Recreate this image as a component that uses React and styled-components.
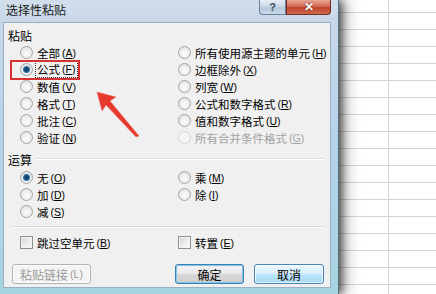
import React from "react";
import styled, { createGlobalStyle } from "styled-components";

const GlobalStyle = createGlobalStyle`
  html, body {
    margin: 0;
    padding: 0;
  }
  body {
    font-family: "Noto Sans CJK SC", "Liberation Sans", sans-serif;
    color: #000;
  }
`;

const Screen = styled.div`
  width: 436px;
  height: 294px;
  overflow: hidden;
  position: relative;
  display: flex;
  background-color: #fff;
  background-image: linear-gradient(
      90deg,
      transparent 388px,
      #d4d4d4 388px,
      #d4d4d4 389px,
      transparent 389px
    ),
    linear-gradient(#d4d4d4 1px, transparent 1px);
  background-size: 100% 100%, 100% 17px;
  background-position: 0 0, 0 12px;
`;

const Dialog = styled.div`
  width: 339px;
  height: 294px;
  box-sizing: border-box;
  padding: 0 7px 6px 3px;
  display: flex;
  flex-direction: column;
  background: linear-gradient(
    180deg,
    #d2deeb 0,
    #c8d8e9 22px,
    #b6d2ea 140px,
    #a6d4e0 100%
  );
  border-right: 1px solid #52707f;
  box-shadow: 3px 0 8px rgba(0, 0, 0, 0.6), 8px 0 14px rgba(0, 0, 0, 0.25);
  flex-shrink: 0;
`;

const TitleBar = styled.div`
  height: 22px;
  display: flex;
  align-items: flex-start;
`;

const Title = styled.div`
  font-size: 12px;
  line-height: 20px;
  padding-left: 3px;
  color: #1a1a1a;
`;

const CaptionButtons = styled.div`
  margin-left: auto;
  display: flex;
`;

const CapButton = styled.div`
  width: ${(p) => (p.$close ? 45 : 27)}px;
  height: 15px;
  box-sizing: border-box;
  display: flex;
  align-items: center;
  justify-content: center;
  font-family: "Liberation Sans", sans-serif;
  font-weight: bold;
  font-size: ${(p) => (p.$close ? 12 : 11)}px;
  color: ${(p) => (p.$close ? "#fff" : "#3c4e62")};
  border: 1px solid ${(p) => (p.$close ? "#6e2e24" : "#6d8299")};
  border-top: none;
  border-radius: ${(p) => (p.$close ? "0 0 4px 0" : "0 0 0 4px")};
  background: ${(p) =>
    p.$close
      ? "linear-gradient(180deg, #e9a797 0, #d06a55 45%, #c0432c 55%, #cf6a4e 100%)"
      : "linear-gradient(180deg, #e6eef6 0, #cbd8e6 45%, #b5c7da 55%, #c9dbea 100%)"};
  text-shadow: ${(p) => (p.$close ? "0 0 2px #5a1a10" : "none")};
`;

const Body = styled.div`
  flex: 1;
  position: relative;
  background: #f0f0f0;
  border: 1px solid #9aaec4;
  padding: 6px 0 0 4px;
  display: flex;
  flex-direction: column;
`;

const GroupLabel = styled.div`
  font-size: 12px;
  line-height: 14px;
  height: 15px;
`;

const GroupHeader = styled.div`
  height: 23px;
  box-sizing: border-box;
  padding-top: 7px;
  display: flex;
  padding-right: 6px;
  align-items: flex-start;
`;

const HeaderText = styled.span`
  font-size: 12px;
  line-height: 14px;
`;

const HeaderLine = styled.span`
  flex: 1;
  margin: 5px 0 0 4px;
  height: 1px;
  background: #dcdfe3;
  border-bottom: 1px solid #fff;
`;

const OptionGrid = styled.div`
  display: grid;
  grid-template-columns: 158px 1fr;
  grid-auto-rows: 17px;
  padding-left: 12px;
`;

const Option = styled.div`
  display: flex;
  align-items: center;
  font-size: 11.5px;
  color: ${(p) => (p.$disabled ? "#a2a2a2" : "#000")};
  white-space: nowrap;
`;

const Radio = styled.span`
  width: 13px;
  height: 13px;
  box-sizing: border-box;
  border-radius: 50%;
  border: 1px solid ${(p) => (p.$disabled ? "#d2d2d2" : "#a4a4a4")};
  background: ${(p) =>
    p.$disabled
      ? "#f4f4f4"
      : "radial-gradient(circle at 50% 60%, #fdfdfd 0, #ececec 55%, #d6d6d6 100%)"};
  display: flex;
  align-items: center;
  justify-content: center;
  margin-right: 4px;
  flex-shrink: 0;

  &::after {
    content: "";
    display: ${(p) => (p.$checked ? "block" : "none")};
    width: 7px;
    height: 7px;
    border-radius: 50%;
    background: radial-gradient(
      circle at 50% 50%,
      #0d2a4a 0,
      #1d5a8c 45%,
      #6aa6d4 100%
    );
  }
`;

const Check = styled.span`
  width: 13px;
  height: 13px;
  box-sizing: border-box;
  border: 1px solid #8e8f8f;
  background: linear-gradient(135deg, #d2d2d2 0, #efefef 60%, #fbfbfb 100%);
  box-shadow: inset 0 0 0 1px #f4f4f4;
  margin-right: 4px;
  flex-shrink: 0;
`;

const Key = styled.span`
  font-family: "Liberation Sans", sans-serif;
  font-size: 10.5px;
  margin-left: 2px;

  u {
    text-underline-offset: 1px;
  }
`;

const Focus = styled.span`
  display: inline-flex;
  align-items: center;
  outline: 1px dotted #333;
  outline-offset: 0;
  padding: 0 2px 0 1px;
  margin-left: -1px;
  line-height: 15px;
`;

const Separator = styled.div`
  margin: 6px 6px 0 4px;
  height: 1px;
  background: #d5dadf;
  border-bottom: 1px solid #fff;
`;

const CheckGrid = styled(OptionGrid)`
  margin-top: 6px;
`;

const ButtonRow = styled.div`
  display: flex;
  margin-top: 13px;
  padding: 0 6px 0 4px;
  gap: 10px;
`;

const Button = styled.div`
  width: ${(p) => p.$w}px;
  height: 20px;
  box-sizing: border-box;
  border-radius: 3px;
  display: flex;
  align-items: center;
  justify-content: center;
  font-size: 12px;
  border: 1px solid
    ${(p) => (p.$disabled ? "#b0b4b7" : p.$default ? "#3c7fb1" : "#4a86b4")};
  color: ${(p) => (p.$disabled ? "#9a9a9a" : "#000")};
  background: ${(p) =>
    p.$disabled
      ? "#f4f4f4"
      : p.$default
      ? "linear-gradient(180deg, #f4f4f4 0, #e8e8e8 48%, #d8d8d8 52%, #cdcdcd 100%)"
      : "linear-gradient(180deg, #eaf6fd 0, #d9f0fc 48%, #bee6fd 52%, #a7d9f5 100%)"};
  box-shadow: ${(p) =>
    p.$default ? "inset 0 0 0 1px #7fc4ea" : "inset 0 0 0 1px rgba(255,255,255,0.7)"};
  margin-right: ${(p) => (p.$push ? "auto" : "0")};
`;

const RedBox = styled.div`
  position: absolute;
  left: 6px;
  top: 37px;
  width: 70px;
  height: 20px;
  box-sizing: border-box;
  border: 2px solid #d63232;
  pointer-events: none;
`;

const ArrowLayer = styled.svg`
  position: absolute;
  left: 0;
  top: 0;
  pointer-events: none;
`;

const pasteOptions = [
  ["全部", "A"],
  ["所有使用源主题的单元", "H"],
  ["公式", "F", true],
  ["边框除外", "X"],
  ["数值", "V"],
  ["列宽", "W"],
  ["格式", "T"],
  ["公式和数字格式", "R"],
  ["批注", "C"],
  ["值和数字格式", "U"],
  ["验证", "N"],
  ["所有合并条件格式", "G", false, true],
];

const opOptions = [
  ["无", "O", true],
  ["乘", "M"],
  ["加", "D"],
  ["除", "I"],
  ["减", "S"],
];

function Label({ text, k }) {
  return (
    <>
      {text}
      <Key>
        (<u>{k}</u>)
      </Key>
    </>
  );
}

function RadioOption({ text, k, checked, disabled, focused }) {
  return (
    <Option $disabled={disabled}>
      <Radio $checked={checked} $disabled={disabled} />
      {focused ? (
        <Focus>
          <Label text={text} k={k} />
        </Focus>
      ) : (
        <Label text={text} k={k} />
      )}
    </Option>
  );
}

export default function App() {
  return (
    <Screen>
      <GlobalStyle />
      <Dialog>
        <TitleBar>
          <Title>选择性粘贴</Title>
          <CaptionButtons>
            <CapButton>?</CapButton>
            <CapButton $close>✕</CapButton>
          </CaptionButtons>
        </TitleBar>
        <Body>
          <GroupLabel>粘贴</GroupLabel>
          <OptionGrid>
            {pasteOptions.map(([t, k, c, d]) => (
              <RadioOption key={k} text={t} k={k} checked={c} disabled={d} focused={c} />
            ))}
          </OptionGrid>
          <GroupHeader>
            <HeaderText>运算</HeaderText>
            <HeaderLine />
          </GroupHeader>
          <OptionGrid>
            {opOptions.map(([t, k, c]) => (
              <RadioOption key={k} text={t} k={k} checked={c} />
            ))}
          </OptionGrid>
          <Separator />
          <CheckGrid>
            <Option>
              <Check />
              <Label text="跳过空单元" k="B" />
            </Option>
            <Option>
              <Check />
              <Label text="转置" k="E" />
            </Option>
          </CheckGrid>
          <ButtonRow>
            <Button $w={79} $disabled $push>
              粘贴链接<Key>(L)</Key>
            </Button>
            <Button $w={69} $default>
              确定
            </Button>
            <Button $w={70}>取消</Button>
          </ButtonRow>
          <RedBox />
        </Body>
      </Dialog>
      <ArrowLayer width="436" height="294" viewBox="0 0 436 294">
        <polygon
          points="97,92 116,97 110,101 139,136 136,137 106,105 102,111"
          fill="#e8392f"
          stroke="#f07068"
          strokeWidth="0.6"
          strokeLinejoin="round"
        />
      </ArrowLayer>
    </Screen>
  );
}
